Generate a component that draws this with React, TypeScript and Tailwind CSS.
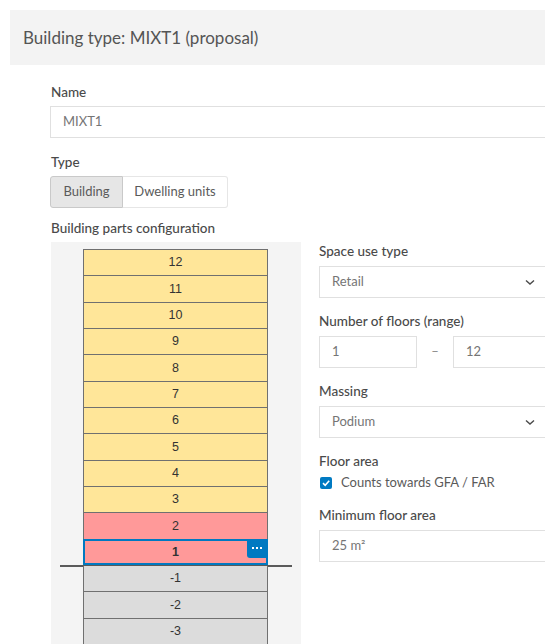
import React from 'react';

type Floor = { level: number; kind: 'upper' | 'podium' | 'below' };

const floors: Floor[] = [
    ...[12, 11, 10, 9, 8, 7, 6, 5, 4, 3].map((level) => ({ level, kind: 'upper' as const })),
    { level: 2, kind: 'podium' },
    { level: 1, kind: 'podium' },
    { level: -1, kind: 'below' },
    { level: -2, kind: 'below' },
    { level: -3, kind: 'below' },
];

const selectedLevel = 1;

const rowColor: Record<Floor['kind'], string> = {
    upper: 'bg-[#ffe699]',
    podium: 'bg-[#ff9999]',
    below: 'bg-[#dcdcdc]',
};

const Label: React.FC<{ children: React.ReactNode; className?: string }> = ({ children, className = '' }) => (
    <div className={`h-[18px] flex items-center text-[13.5px] font-medium text-[#4a4a4a] ${className}`}>
        {children}
    </div>
);

const TextBox: React.FC<{ value: string; className?: string; children?: React.ReactNode }> = ({ value, className = '', children }) => (
    <div className={`h-[32px] border border-[#e0e0e0] bg-white flex items-center px-[12px] text-[13px] text-[#757575] ${className}`}>
        {value}
        {children}
    </div>
);

const Chevron: React.FC = () => (
    <svg width="12" height="12" viewBox="0 0 12 12" className="ml-auto mr-[2px]">
        <path d="M2 4.5 L6 8 L10 4.5" fill="none" stroke="#4a4a4a" strokeWidth="1.4" />
    </svg>
);

const SelectBox: React.FC<{ value: string }> = ({ value }) => (
    <TextBox value={value}>
        <Chevron />
    </TextBox>
);

const FloorStack: React.FC = () => (
    <div className="w-[250px] bg-[#f4f4f4] pt-[7px] pl-[32px] h-[410px]">
        <div className="relative w-[185px] border-t border-[#707070]">
            {floors.map((floor) => {
                const selected = floor.level === selectedLevel;
                return (
                    <div
                        key={floor.level}
                        className={`relative h-[26.33px] border-x border-b border-[#707070] flex items-center justify-center text-[12.5px] text-[#333] ${rowColor[floor.kind]} ${selected ? 'font-bold' : ''}`}
                        style={{ fontFamily: '"Liberation Sans", Arial, sans-serif' }}
                    >
                        {floor.level}
                        {selected && (
                            <>
                                <div className="absolute -left-px -right-px -top-px bottom-0 border-2 border-[#0079c1]" />
                                <div className="absolute right-0 top-[-1px] w-[20px] h-[19px] bg-[#0079c1] rounded-bl-[3px] flex items-center justify-center gap-[2px]">
                                    <span className="w-[2px] h-[2px] bg-white" />
                                    <span className="w-[2px] h-[2px] bg-white" />
                                    <span className="w-[2px] h-[2px] bg-white" />
                                </div>
                                <div className="absolute left-[-24px] w-[232px] bottom-[-2px] h-[2px] bg-[#5a5a5a]" />
                            </>
                        )}
                    </div>
                );
            })}
        </div>
    </div>
);

const App: React.FC = () => {
    return (
        <div
            className="w-[545px] h-[644px] overflow-hidden bg-white"
            style={{ fontFamily: 'Lato, "Open Sans", sans-serif' }}
        >
            <div className="w-[600px]">
                <div className="mt-[10px] ml-[10px] h-[55px] bg-[#f3f3f3] pl-[13px] flex items-center text-[17px] text-[#555]">
                    Building type: MIXT1 (proposal)
                </div>

                <div className="pl-[50px] pt-[18px] w-[551px]">
                    <Label className="pl-px">Name</Label>
                    <TextBox value="MIXT1" className="mt-[5px]" />

                    <Label className="mt-[15px] pl-px">Type</Label>
                    <div className="mt-[5px] flex h-[32px] text-[13px]">
                        <div className="w-[73px] border border-[#c9c9c9] bg-[#e6e6e6] rounded-l-[3px] flex items-center justify-center text-[#5a5a5a]">
                            Building
                        </div>
                        <div className="w-[105px] border border-l-0 border-[#e6e6e6] rounded-r-[3px] flex items-center justify-center text-[#5a5a5a]">
                            Dwelling units
                        </div>
                    </div>

                    <Label className="mt-[11px] pl-px">Building parts configuration</Label>

                    <div className="mt-[5px] flex gap-[18px] pl-px">
                        <FloorStack />

                        <div className="flex-1 flex flex-col">
                            <Label>Space use type</Label>
                            <div className="mt-[6px]">
                                <SelectBox value="Retail" />
                            </div>

                            <Label className="mt-[14px]">Number of floors (range)</Label>
                            <div className="mt-[6px] flex items-center">
                                <TextBox value="1" className="w-[98px]" />
                                <div className="w-[36px] text-center text-[13px] text-[#8a8a8a]">–</div>
                                <TextBox value="12" className="flex-1" />
                            </div>

                            <Label className="mt-[14px]">Massing</Label>
                            <div className="mt-[6px]">
                                <SelectBox value="Podium" />
                            </div>

                            <Label className="mt-[14px]">Floor area</Label>
                            <div className="mt-[7px] flex items-center h-[12px] text-[13px] text-[#5a5a5a]">
                                <div className="ml-px w-[12px] h-[12px] rounded-[2px] bg-[#007ac2] flex items-center justify-center">
                                    <svg width="10" height="10" viewBox="0 0 10 10">
                                        <path d="M2 5.2 L4.2 7.3 L8.2 2.8" fill="none" stroke="white" strokeWidth="1.6" />
                                    </svg>
                                </div>
                                <span className="ml-[9px]">Counts towards GFA / FAR</span>
                            </div>

                            <Label className="mt-[17px]">Minimum floor area</Label>
                            <div className="mt-[6px]">
                                <TextBox value="25 m²" />
                            </div>
                        </div>
                    </div>
                </div>
            </div>
        </div>
    );
};

export default App;
